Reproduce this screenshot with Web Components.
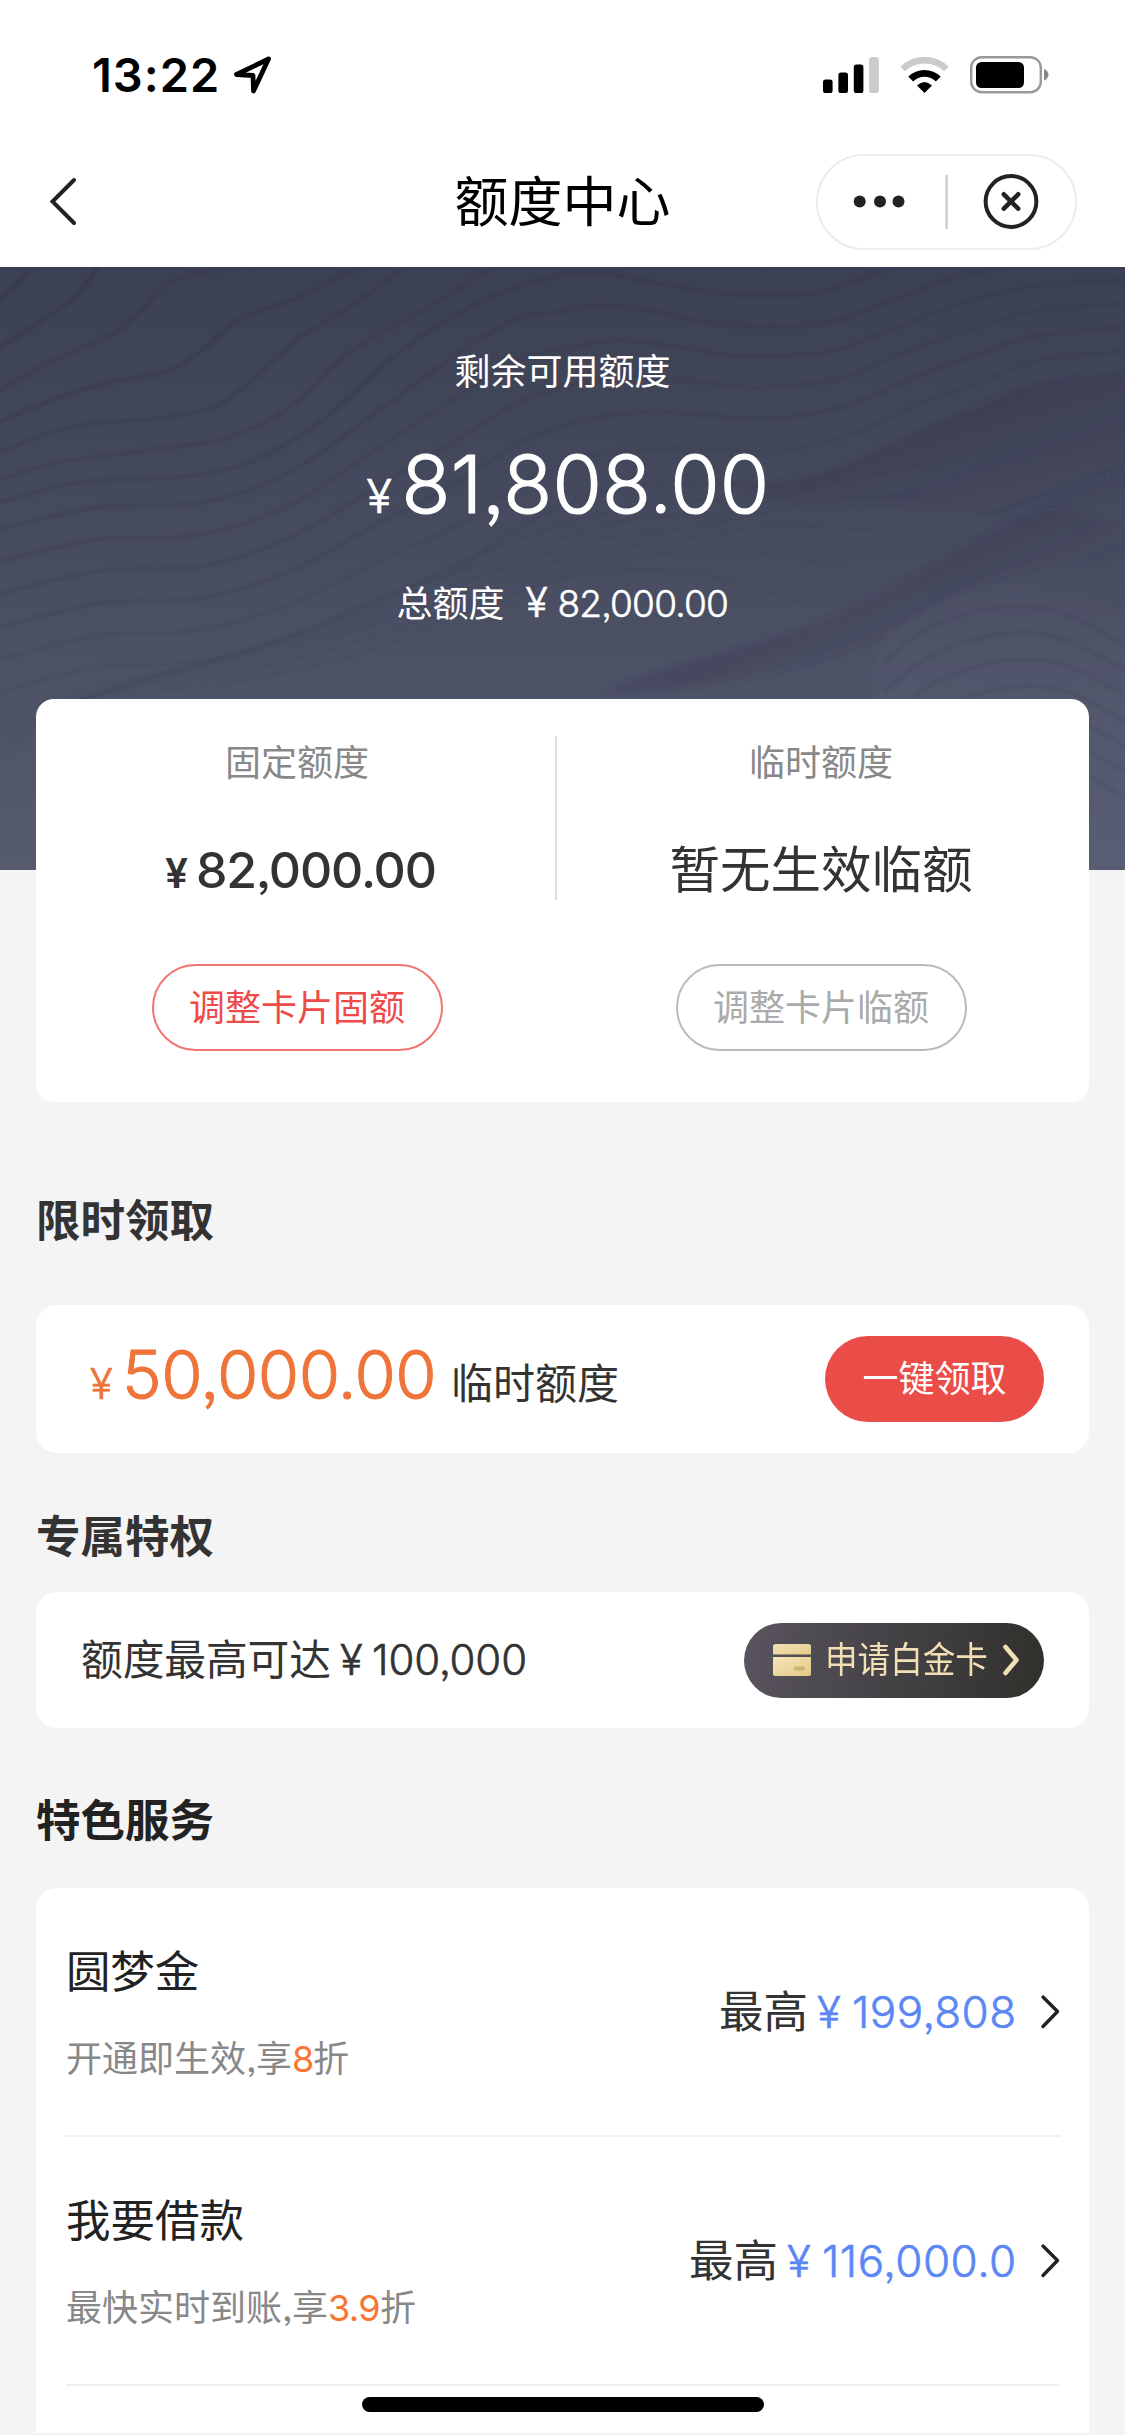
<!DOCTYPE html>
<html lang="zh-CN">
<head>
<meta charset="utf-8">
<title>额度中心</title>
<style>
html,body{margin:0;padding:0}
body{width:1125px;height:2435px;overflow:hidden;background:#f4f4f4;font-family:Inter,"Noto Sans CJK SC",sans-serif;color:#333}
</style>
</head>
<body>
<credit-page></credit-page>
<script>
const define = (name, html, setup) => customElements.define(name, class extends HTMLElement {
  constructor() {
    super();
    this.attachShadow({ mode: 'open' }).innerHTML = html;
  }
  connectedCallback() { if (setup) setup(this, this.shadowRoot); }
});

/* One line of text whose tracking is set so that it fills the given width. */
define('fit-text', `<style>
:host{display:block;flex:none;white-space:nowrap;font-feature-settings:"ss03","ss08"}
:host([weight="300"]){-webkit-text-stroke:.014em currentColor}
span{display:inline-block}
</style><span></span>`, (el, root) => {
  const span = root.querySelector('span');
  span.textContent = el.getAttribute('text');
  const size = el.getAttribute('size'), width = +el.getAttribute('width');
  el.style.fontSize = size + 'px';
  el.style.width = width + 'px';
  el.style.fontWeight = el.getAttribute('weight') || 400;
  const natural = span.offsetWidth;
  span.style.letterSpacing = (width - natural) / span.textContent.length + 'px';
});

define('status-bar', `<style>
:host{display:flex;box-sizing:border-box;height:135px;padding:15px 76px 0 92px;align-items:center;justify-content:space-between;background:#fff;color:#000}
.left{display:flex;align-items:center;gap:13px}
.right{display:flex;align-items:center;gap:21px}
fit-text{line-height:60px}
svg{display:block}
</style>
<div class="left"><fit-text text="13:22" size="47" weight="600" width="128"></fit-text>
<svg width="40" height="40" viewBox="0 0 40 40" fill="none" stroke="#000" stroke-width="4.8" stroke-linejoin="round" stroke-linecap="round"><path d="M35.500 4 3.500 19.500 20 20.500 20.500 36Z"/></svg></div>
<div class="right">
<svg width="56" height="36" viewBox="0 0 56 36"><rect y="22.5" width="9.6" height="13.5" rx="2.6"/><rect x="15.4" y="15.5" width="9.6" height="20.5" rx="2.6"/><rect x="30.8" y="7.5" width="9.6" height="28.5" rx="2.6"/><rect x="46.2" width="9.6" height="36" rx="2.6" fill="#cbcbcb"/></svg>
<svg width="49" height="36" viewBox="0 0 49 36" fill="none"><path d="M2.6 12A31.5 31.5 0 0 1 46.4 12" stroke="#cbcbcb" stroke-width="6.6"/><path d="M10.7 22A19.5 19.5 0 0 1 38.3 22" stroke="#000" stroke-width="6.8"/><path d="M24.5 36 17 28.6Q24.5 21.500 32 28.6Z" fill="#000"/></svg>
<svg width="79" height="38" viewBox="0 0 79 38"><rect x="1.2" y="1.2" width="69.6" height="35" rx="10.5" fill="#fff" stroke="#999" stroke-width="2.4"/><rect x="6" y="6" width="48" height="26" rx="5.5"/><path d="M74 13Q78.5 15 78.5 18.800T74 24.600Z" fill="#888"/></svg>
</div>`);

define('nav-bar', `<style>
:host{display:grid;grid-template-columns:1fr auto 1fr;height:132px;align-items:center;background:#fff;color:#000}
.back{margin-left:49px;display:block}
.capsule{justify-self:end;margin-right:48px;box-sizing:border-box;width:261px;height:96px;margin-top:1px;border:2px solid #ececec;border-radius:48px;display:flex;align-items:center}
fit-text{line-height:80px;padding-top:3px}
svg{display:block}
</style>
<svg class="back" width="30" height="50" viewBox="0 0 30 50" fill="none" stroke="#222" stroke-width="4" stroke-linecap="round"><path d="M25 4 3.500 25.500 25 47"/></svg>
<fit-text text="额度中心" size="54" width="216"></fit-text>
<div class="capsule"><svg width="257" height="92" viewBox="0 0 257 92"><g fill="#222"><circle cx="41.700" cy="45.500" r="6"/><circle cx="62" cy="45.500" r="6"/><circle cx="80.500" cy="45.500" r="6"/></g><path d="M128.600 19V73" stroke="#d0d0d0" stroke-width="2.600"/><g fill="none" stroke="#222" stroke-linecap="round"><circle cx="193" cy="45.500" r="25.400" stroke-width="4"/><path d="M185.800 38.300 200.200 52.700M200.200 38.300 185.800 52.700" stroke-width="4.600"/></g></svg></div>`);

define('contour-lines', `<style>:host{display:block;position:absolute;inset:0}svg{display:block}</style>
<svg width="1125" height="603" viewBox="0 0 1125 603" fill="none">
<defs>
<linearGradient id="fall1" gradientUnits="userSpaceOnUse" x1="960" y1="150" x2="1005" y2="275"><stop offset="0" stop-color="#33354a" stop-opacity=".26"/><stop offset="1" stop-color="#33354a" stop-opacity="0"/></linearGradient>
<linearGradient id="fall2" gradientUnits="userSpaceOnUse" x1="880" y1="322" x2="912" y2="390"><stop offset="0" stop-color="#33354a" stop-opacity=".27"/><stop offset="1" stop-color="#33354a" stop-opacity="0"/></linearGradient>
<linearGradient id="rise" x1="0" y1="0" x2="0" y2="1"><stop offset="0" stop-color="#656b82" stop-opacity=".06"/><stop offset=".5" stop-color="#656b82" stop-opacity=".2"/></linearGradient>
<filter id="soft" x="-10%" y="-10%" width="120%" height="120%"><feGaussianBlur stdDeviation="3"/></filter>
</defs>
<g filter="url(#soft)">
<path fill="url(#fall1)" d="M720 219C800 222 860 195 920 165C985 138 1030 108 1130 108V300C1040 220 860 250 720 219Z"/>
<path fill="url(#fall2)" d="M600 425C690 390 740 385 820 355C890 325 960 280 1020 250Q1070 230 1130 268V325C1060 265 970 320 890 365C820 400 720 425 600 425Z"/>
<path fill="url(#rise)" d="M880 440C855 400 885 365 940 335Q1035 295 1130 350V603H1089V440Z"/>
</g>
<g id="lines" stroke="#333347" stroke-linecap="round"></g>
</svg>`, (el, root) => {
  const lines = root.getElementById('lines');
  const draw = (points, opacity) => {
    let d = `M${points[0][0]} ${points[0][1]}`;
    for (let i = 0; i < points.length - 1; i++) {
      const a = points[i - 1] || points[i], b = points[i], c = points[i + 1], e = points[i + 2] || c;
      d += `C${b[0] + (c[0] - a[0]) / 6} ${b[1] + (c[1] - a[1]) / 6} ${c[0] - (e[0] - b[0]) / 6} ${c[1] - (e[1] - b[1]) / 6} ${c[0]} ${c[1]}`;
    }
    for (const [w, o] of [[2.5, opacity * .7], [7, opacity * .4]]) {
      const path = document.createElementNS('http://www.w3.org/2000/svg', 'path');
      path.setAttribute('d', d);
      path.setAttribute('stroke-width', w);
      path.setAttribute('stroke-opacity', o);
      lines.append(path);
    }
  };
  const blend = (a, b, t) => a.map((p, i) => [p[0] + (b[i][0] - p[0]) * t, p[1] + (b[i][1] - p[1]) * t]);
  [
    [[0,33],[15,20],[32,0]],
    [[0,80],[40,55],[75,30],[97,0]],
    [[0,123],[50,95],[110,68],[140,45],[165,18],[200,5],[230,2]],
    [[0,155],[60,130],[110,115],[165,105],[200,85],[240,52],[300,30],[360,0]],
    [[0,185],[70,160],[150,152],[210,142],[250,115],[300,70],[350,40],[405,0]],
    [[0,212],[60,195],[150,183],[230,170],[290,140],[350,85],[420,45],[490,2]],
    [[0,235],[80,215],[180,210],[250,195],[320,155],[400,85],[470,40],[540,13],[600,6],[680,20],[740,28],[820,25],[890,0]]
  ].forEach((p, i) => draw(p, .31 - i * .017));
  const upper = [[0,262],[100,240],[200,236],[290,205],[370,150],[460,85],[520,50],[560,45],[600,38],[660,45],[720,57],[820,57],[880,38],[950,12],[1030,-5],[1125,-12]];
  const ridge = [[0,425],[100,400],[200,395],[290,370],[370,335],[460,300],[520,260],[600,225],[680,217],[740,217],[800,215],[860,195],[920,165],[990,140],[1040,118],[1125,108]];
  for (let i = 0; i < 6; i++) draw(blend(upper, ridge, i / 5), .2 - i * .028);
  const low = [[0,500],[60,440],[200,430],[340,405],[470,350],[560,320],[660,330],[760,372]];
  for (let i = 1; i < 7; i++) draw(blend(ridge.filter((_, k) => k % 2 === 0), low, i / 7), .035);
  const hillTop = [[884,395],[930,360],[1000,340],[1060,345],[1125,378]];
  const hillEnd = [[900,560],[960,520],[1020,500],[1070,502],[1125,530]];
  for (let i = 0; i < 7; i++) draw(blend(hillTop, hillEnd, i / 6), .1);
});

define('credit-hero', `<style>
:host{display:flex;flex-direction:column;align-items:center;position:relative;box-sizing:border-box;height:603px;padding-top:75px;color:#fff;background:linear-gradient(#3c4053,#484c60 48%,#565b70)}
.label,.big,.total{position:relative;display:flex;align-items:baseline}
.label{line-height:60px}
.big{line-height:100px;margin:32px 0 0 11px;gap:5px}
.total{line-height:60px;margin-top:26px}
.yen{margin-left:21px}
.sum{margin-left:7px}
</style>
<contour-lines></contour-lines>
<div class="label"><fit-text text="剩余可用额度" size="36" width="216"></fit-text></div>
<div class="big"><fit-text text="¥" size="47" weight="300" width="30"></fit-text><fit-text text="81,808.00" size="80" weight="300" width="368"></fit-text></div>
<div class="total"><fit-text text="总额度" size="36" width="108"></fit-text><fit-text class="yen" text="¥" size="41" weight="300" width="25"></fit-text><fit-text class="sum" text="82,000.00" size="37" weight="300" width="171"></fit-text></div>`);

define('pill-button', `<style>
:host{display:flex;box-sizing:border-box;align-items:center;justify-content:center;width:291px;height:87px;border-radius:44px;border:2px solid currentColor;line-height:60px}
:host([tone=red]){color:#ee4a47;border-color:#f27470}
:host([tone=grey]){color:#aaa;border-color:#bbb}
:host([tone=solid]){width:219px;height:86px;border:0;background:#ea4d48;color:#fff}
</style><slot></slot>`);

define('limit-column', `<style>
:host{flex:1;display:flex;flex-direction:column;align-items:center;padding-top:37px}
.label{line-height:54px;color:#888}
.value{height:70px;line-height:70px;margin:45px 0 59px;display:flex;align-items:baseline;color:#333}
</style><div class="label"><slot name="label"></slot></div><div class="value"><slot></slot></div><slot name="action"></slot>`);

define('limit-card', `<style>
:host{display:flex;position:relative;box-sizing:border-box;margin:-171px 36px 0;height:403px;padding-right:7px;background:#fff;border-radius:18px}
.rule{width:2px;height:164px;margin:37px 3px 0 -3px;background:#dcdce8}
.yen{margin-left:7px}
.sum{margin-left:4px}
</style>
<limit-column><fit-text slot="label" text="固定额度" size="36" width="144"></fit-text><fit-text class="yen" text="¥" size="41" weight="600" width="27"></fit-text><fit-text class="sum" text="82,000.00" size="50" weight="500" width="240"></fit-text><pill-button slot="action" tone="red"><fit-text text="调整卡片固额" size="36" width="216"></fit-text></pill-button></limit-column>
<div class="rule"></div>
<limit-column><fit-text slot="label" text="临时额度" size="36" width="144"></fit-text><fit-text text="暂无生效临额" size="50.500" width="303"></fit-text><pill-button slot="action" tone="grey"><fit-text text="调整卡片临额" size="36" width="216"></fit-text></pill-button></limit-column>`);

customElements.define('section-heading', class extends HTMLElement {
  connectedCallback() {
    this.attachShadow({ mode: 'open' }).innerHTML = `<style>:host{display:block;line-height:60px;padding-left:36px}</style><fit-text size="44.500" width="178" weight="700" text="${this.getAttribute('text')}"></fit-text>`;
  }
});

define('row-card', `<style>
:host{display:flex;box-sizing:border-box;margin:0 36px;padding:0 45px 0 0;align-items:center;justify-content:space-between;background:#fff;border-radius:21px}
.text{display:flex;align-items:baseline}
</style><div class="text"><slot></slot></div><slot name="action"></slot>`);

define('platinum-button', `<style>
:host{display:flex;box-sizing:border-box;align-items:center;width:300px;height:75px;border-radius:37.5px;padding-left:29px;color:#f3dfb4;background:linear-gradient(95deg,#5a545e,#504c54 20%,#403e40 60%,#31302c)}
.label{width:162px;margin-left:14px;line-height:60px}
.label fit-text{transform:scaleX(.905);transform-origin:0 50%}
.arrow{margin-left:15px}
svg{display:block}
</style>
<svg width="38" height="32" viewBox="0 0 38 32"><defs><linearGradient id="gold" x1="0" y1="0" x2="1" y2="1"><stop stop-color="#f4e4b8"/><stop offset="1" stop-color="#e5ca86"/></linearGradient></defs><path fill="url(#gold)" d="M2.500 0H35.500Q38 0 38 2.500V10.500H0V2.500Q0 0 2.500 0Z"/><path fill="url(#gold)" d="M0 13H38V29.500Q38 32 35.500 32H2.500Q0 32 0 29.500Z"/><rect x="21" y="22.500" width="11" height="4" rx="1.500" fill="#cdb172"/></svg>
<div class="label"><fit-text text="申请白金卡" size="36" width="180"></fit-text></div>
<svg class="arrow" width="20" height="34" viewBox="0 0 20 34" fill="none" stroke="#f3dfb4" stroke-width="4.600" stroke-linecap="round" stroke-linejoin="round"><path d="M3.500 4 14.500 17 3.500 30"/></svg>`);

define('service-item', `<style>
:host{display:flex;box-sizing:border-box;height:249px;align-items:flex-start;justify-content:space-between;border-bottom:2px solid #f1f1f1}
.info{padding-top:54px}
.name{line-height:60px;color:#222}
.note{line-height:60px;margin-top:27px;color:#888;display:flex;align-items:baseline}
.value{display:flex;align-items:center;margin-top:94px;line-height:60px;color:#333}
svg{display:block;margin-left:23px}
</style>
<div class="info"><div class="name"><slot name="name"></slot></div><div class="note"><slot name="note"></slot></div></div>
<div class="value"><slot></slot><svg width="20" height="36" viewBox="0 0 20 36" fill="none" stroke="#222" stroke-width="3.400" stroke-linecap="round" stroke-linejoin="round"><path d="M3 3 17.500 17.500 3 32.500"/></svg></div>`);

define('money-value', `<style>
:host{display:flex;align-items:baseline}
.yen{margin-left:9px}
.sum{margin-left:8px}
.yen,.sum{color:#5b87f5}
</style>`, (el, root) => {
  root.innerHTML += `<fit-text text="最高" size="44.500" width="89"></fit-text><fit-text class="yen" text="¥" size="44" width="27" weight="300"></fit-text><fit-text class="sum" text="${el.getAttribute('sum')}" size="44" weight="300" width="${el.getAttribute('width')}"></fit-text>`;
});

define('credit-page', `<style>
:host{display:flex;flex-direction:column;width:1125px;height:2435px;position:relative;overflow:hidden}
.t1{margin:89px 0 54px}.t2{margin:54px 0 25px}.t3{margin:63px 0 37px;color:#222}
.claim{height:148px;padding-left:54px;line-height:80px}
.apply{height:136px;padding-left:45px;line-height:60px}
.orange{color:#ef7439}
.services{box-sizing:border-box;height:545px;margin:0 36px;padding:0 29px 0 30px;background:#fff;border-radius:21px 21px 0 0}
.accent{color:#fa7432}
.home{position:absolute;left:362px;bottom:23px;width:402px;height:15px;border-radius:8px;background:#000}
</style>
<status-bar></status-bar>
<nav-bar></nav-bar>
<credit-hero></credit-hero>
<limit-card></limit-card>
<section-heading class="t1" text="限时领取"></section-heading>
<row-card class="claim"><fit-text class="orange" text="¥" size="42" weight="300" width="26"></fit-text><fit-text class="orange" style="margin-left:6px" text="50,000.00" size="67" weight="300" width="314"></fit-text><fit-text style="margin-left:15px" text="临时额度" size="42" width="168"></fit-text><pill-button slot="action" tone="solid"><fit-text text="一键领取" size="36" width="144"></fit-text></pill-button></row-card>
<section-heading class="t2" text="专属特权"></section-heading>
<row-card class="apply"><fit-text text="额度最高可达" size="41.800" width="250"></fit-text><fit-text style="margin-left:9px" text="¥" size="42" weight="300" width="26"></fit-text><fit-text style="margin-left:6px" text="100,000" size="42" weight="300" width="155"></fit-text><platinum-button slot="action"></platinum-button></row-card>
<section-heading class="t3" text="特色服务"></section-heading>
<div class="services">
<service-item><fit-text slot="name" text="圆梦金" size="44.500" width="133.500"></fit-text>
<fit-text slot="note" text="开通即生效" size="36" width="180"></fit-text><fit-text slot="note" text="," size="36" width="10"></fit-text><fit-text slot="note" text="享" size="36" width="36"></fit-text><fit-text class="accent" slot="note" text="8" size="36" width="21"></fit-text><fit-text slot="note" text="折" size="36" width="36"></fit-text>
<money-value sum="199,808" width="165"></money-value></service-item>
<service-item><fit-text slot="name" text="我要借款" size="44.500" width="178"></fit-text>
<fit-text slot="note" text="最快实时到账" size="36" width="216"></fit-text><fit-text slot="note" text="," size="36" width="10"></fit-text><fit-text slot="note" text="享" size="36" width="36"></fit-text><fit-text class="accent" slot="note" text="3.9" size="36" width="52"></fit-text><fit-text slot="note" text="折" size="36" width="36"></fit-text>
<money-value sum="116,000.0" width="195"></money-value></service-item>
</div>
<div class="home"></div>`);
</script>
</body>
</html>
